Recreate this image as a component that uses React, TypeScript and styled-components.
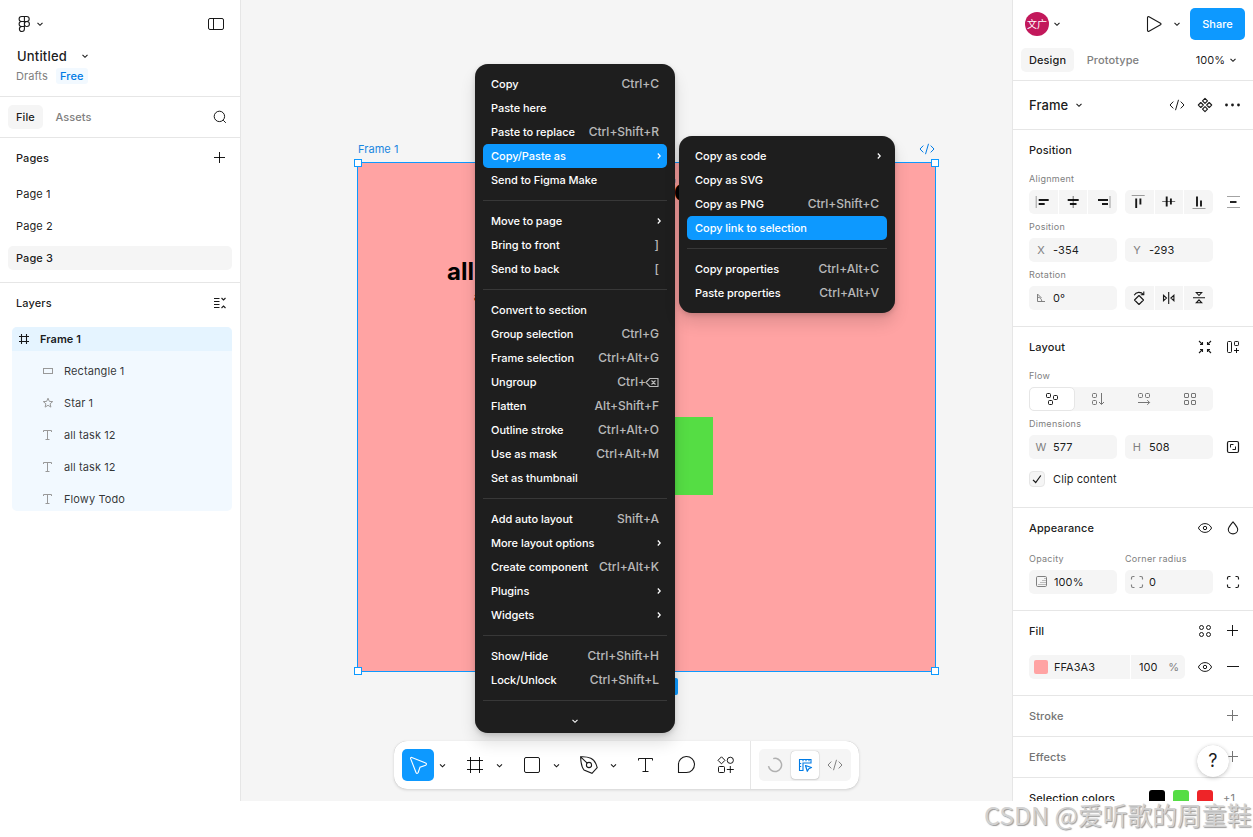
import React from "react";
import styled, { createGlobalStyle, css } from "styled-components";

const GlobalStyle = createGlobalStyle`
  * { box-sizing: border-box; }
  html, body { margin: 0; padding: 0; background: #fff; }
  body {
    font-family: Inter, "Liberation Sans", sans-serif;
    font-size: 11px;
    line-height: 16px;
    letter-spacing: 0.1px;
    color: rgba(0, 0, 0, 0.9);
    overflow: hidden;
  }
`;

const BLUE = "#0d99ff";
const LINE = "#e6e6e6";

/* ---------- icons: every drawing is centred on 0,0 ---------- */

const GLYPHS: Record<string, React.ReactNode> = {
  chevron: <path d="M-2.5 -1.2 0 1.3 2.5 -1.2" strokeWidth="1.1" />,
  chevronRight: <path d="M-1.2 -2.5 1.2 0 -1.2 2.5" strokeWidth="1.2" />,
  logo: (
    <path d="M.4-7.5h-2.8a2.5 2.5 0 0 0 0 5H.4M.4-7.5h2.3a2.5 2.5 0 0 1 0 5H.4M.4-2.5h-2.8a2.5 2.5 0 0 0 0 5H.4M2.9-2.5a2.5 2.5 0 1 1 0 5a2.5 2.5 0 1 1 0-5M.4 2.5h-2.8a2.5 2.5 0 1 0 2.8 2.5V-7.5" strokeWidth="1.1" />
  ),
  panel: <><rect x="-7.5" y="-5.5" width="15" height="11" rx="1.5" /><path d="M-2.5-5.5v11" /></>,
  search: <><circle cx="-.6" cy="-.6" r="5.2" /><path d="M3.2 3.2 5.8 5.8" /></>,
  plus: <path d="M-.5-6V5M-6-.5H5" strokeWidth="1" />,
  minus: <path d="M-6-.5H6" />,
  collapse: <path d="M-6-4.5h5.5M-6-1.5h5.5M-6 1.5h5.5M-6 4.5h5.5M1.5-5l2 2 2-2M1.5 5l2-2 2 2" strokeWidth="1.1" />,
  frameSmall: <path d="M-2.5-5V5M2.5-5V5M-5-2.5H5M-5 2.5H5" strokeWidth="1.1" />,
  rectSmall: <rect x="-4.5" y="-2.5" width="9" height="5" />,
  star: <path d="M0-4.8 1.35-1.6 4.7-1.4 2.1.8 2.9 4.1 0 2.3-2.9 4.1-2.1.8-4.7-1.4-1.35-1.6Z" />,
  textSmall: <path d="M-4.5-3v-1.5h8V-3M-.5-4.5v9M-2.5 4.5h4" />,
  cursor: <path d="M-7.4-6.4-1.9 7.7c.4 1 1.7 1 2 0L2 2.3 7.7.2c1-.4 1-1.8 0-2.1L-6.2-7.6c-.8-.3-1.5.4-1.2 1.2Z" strokeWidth="1.1" />,
  frame: <path d="M-4.5-8V8M4.5-8V8M-8-4.5H8M-8 4.5H8" />,
  rect: <rect x="-7.5" y="-7.5" width="15" height="15" rx="1.5" />,
  pen: (
    <>
      <path d="M-8.400-8.200C-8.200-3-8 1.500-5 5L3 8.300 8.200 2.600C7-2 5-5.500 1.800-6.800-1.500-8.200-5-8.400-8.400-8.200ZL-1.800-1.900" strokeWidth="1.1" />
      <circle cx="0" cy="0" r="2.600" strokeWidth="1.1" />
    </>
  ),
  text: <path d="M-7.5-4.500v-2h14v2M-.5-6.500v13M-3.500 6.500h6" />,
  bubble: <path d="M-7.500 7.500V0A8 8 0 1 1 .5 7.500Z" strokeWidth="1.1" />,
  actions: (
    <>
      <path d="M-4.500-8.200-1-4.700-4.500-1.200-8-4.700ZM4.300 1v7M.8 4.500h7" strokeLinejoin="round" />
      <circle cx="4.300" cy="-4.700" r="3.100" />
      <rect x="-7.500" y="1.500" width="6" height="6" rx="1" />
    </>
  ),
  arc: <path d="M-1.800-6.400A6.600 6.600 0 1 1-6.500 1.200" strokeWidth="1.500" />,
  ruler: (
    <>
      <path d="M-5.500-5.500h11.500v3.500h-8v7.500h-3.500ZM-2-3.800v-1.700M1-3.800v-1.700M4-3.800v-1.700M-3.800-1.500h-1.700M-3.800 1.500h-1.700" strokeWidth="1.100" />
      <path d="M.5.500 6.500 2.500 3.800 3.700 2.300 6.300Z" strokeWidth="1.200" strokeLinejoin="round" />
    </>
  ),
  code: <path d="M-3.700-3.400-7 0l3.300 3.400M3.700-3.400 7 0 3.700 3.400M1.500-5.200-1.500 5.200" />,
  play: <path d="M-6.500-6.400v12.800c0 .8.800 1.200 1.500.8L6.500.8c.7-.4.700-1.200 0-1.600L-5-7.200c-.7-.4-1.500 0-1.500.8Z" strokeWidth="1.100" />,
  component: (
    <path d="M0-6.700 2.500-4.200 0-1.700-2.500-4.200ZM0 1.700 2.500 4.200 0 6.700-2.500 4.200ZM-4.200-2.500-1.700 0-4.200 2.500-6.700 0ZM4.200-2.500 6.700 0 4.200 2.500 1.700 0Z" strokeLinejoin="round" strokeWidth="1.100" />
  ),
  dots: <g fill="currentColor" stroke="none"><circle cx="-6.500" r="1.400" /><circle cx="-.5" r="1.400" /><circle cx="5.500" r="1.400" /></g>,
  alignLeft: <><path d="M-6.800-6V6" opacity=".4" /><path d="M-4.300-2H5.700M-4.300 2H1.700" strokeWidth="1.900" /></>,
  alignCenter: <><path d="M.2-6V6" opacity=".6" /><path d="M-5.300-2h11M-3.100 2h6.600" strokeWidth="1.900" /></>,
  alignRight: <><path d="M7-6V6" opacity=".4" /><path d="M-5-2H5M-1 2H5" strokeWidth="1.900" /></>,
  alignTop: <><path d="M-7.300-6.500h13" opacity=".4" /><path d="M-2.800-3.500V6M1.400-3.500V2.500" strokeWidth="1.900" /></>,
  alignMiddle: <><path d="M-6.800-.5h13" opacity=".6" /><path d="M-2.300-5.500v10M1.900-3.500v6" strokeWidth="1.900" /></>,
  alignBottom: <><path d="M-6.500 6.500h13" opacity=".4" /><path d="M-2-5.500V4.500M2-1.500V4.500" strokeWidth="1.900" /></>,
  distribute: <><path d="M-6-5.500H7M-6 5.500H7" opacity=".4" /><path d="M-3 0h6.500" strokeWidth="1.900" /></>,
  angle: <path d="M-3.500-4V3.500H4M-3.500-.8C-1-.8.800 1 .800 3.500M-3.500-4 .5 0" />,
  rotate: <path d="M0-2.500 4.500 2 0 6.500-4.500 2ZM-4.800-2.700C-3-6.400 1.800-6.600 4.500-3.500M4.800-6.500v3.200H1.700" strokeLinejoin="round" strokeWidth="1.100" />,
  flipH: <path d="M-.3-6V6M-5.500-2.700v5.400L-2.500 0ZM4.900-2.700v5.400L1.900 0Z" strokeWidth="1.100" />,
  flipV: <path d="M-6-.3H6M-2.700-5.500h5.400L0-2.500ZM-2.700 4.800h5.400L0 1.900Z" strokeWidth="1.100" />,
  shrink: <path d="M-6-6-3-3M-5-2.500h2.500V-5M6-6 3-3M5-2.500H2.500V-5M-6 6-3 3M-5 2.500h2.500V5M6 6 3 3M5 2.500H2.500V5" strokeWidth="1.100" />,
  addLayout: <><rect x="-5.500" y="-5.500" width="4" height="11" rx="1" /><rect x="1.500" y="-5.500" width="4" height="4" rx=".8" /><path d="M3.500 1v5M1 3.500h5" /></>,
  flowFree: <><rect x="-5.500" y="-5.500" width="4" height="4" rx="1" /><rect x="1.500" y="-3.500" width="4" height="4" rx="1" /><rect x="-3.500" y="1.500" width="4" height="4" rx="1" /></>,
  flowDown: <><rect x="-5.500" y="-5.500" width="4" height="4" rx="1" /><rect x="-5.500" y="1.500" width="4" height="4" rx="1" /><path d="M3.500-6V5M1 3l2.500 2.500L6 3" /></>,
  flowRight: <><rect x="-5.500" y="-5.500" width="4" height="4" rx="1" /><rect x="1.500" y="-5.500" width="4" height="4" rx="1" /><path d="M-6 3.500H5.500M3.300 1.200 5.600 3.500 3.300 5.800" /></>,
  flowGrid: <><rect x="-5.500" y="-5.500" width="4" height="4" rx=".5" /><rect x="1.500" y="-5.500" width="4" height="4" rx=".5" /><rect x="-5.500" y="1.500" width="4" height="4" rx=".5" /><rect x="1.500" y="1.500" width="4" height="4" rx=".5" /></>,
  aspect: <><rect x="-5.500" y="-5.500" width="11" height="11" rx="1.500" strokeWidth="1.200" /><path d="M-2.500.500v-3h3M2.500-.500v3h-3" /></>,
  check: <path d="M-4 .8-1.300 3.500 3.800-3.500" strokeWidth="1.200" />,
  eye: <><path d="M-6.600 0C-5-3.200-2.500-4.400 0-4.400S5-3.200 6.600 0C5 3.200 2.500 4.400 0 4.400S-5 3.200-6.600 0Z" /><circle r="1.700" /></>,
  drop: <path d="M0-6.200C2.500-3 4.700-.8 4.700 1.600a4.700 4.300 0 0 1-9.400 0C-4.700-.8-2.500-3 0-6.200Z" strokeLinejoin="round" strokeWidth="1.100" />,
  opacity: <><rect x="-4.500" y="-5.500" width="10" height="10" rx="1.200" /><path d="M-2.500 2.500h7M-.500.500h5M1.500-1.500h3M3.500-3.500h1" strokeDasharray="1 1" /></>,
  corners: <path d="M-5.500-2.500v-1.500a1.500 1.500 0 0 1 1.500-1.500h1.500M2.500-5.500h1.500a1.500 1.500 0 0 1 1.500 1.500v1.500M5.500 2.500v1.500a1.500 1.500 0 0 1-1.500 1.500H2.500M-2.500 5.500h-1.500a1.500 1.500 0 0 1-1.500-1.500V2.500" strokeWidth="1.150" />,
  styles: <><circle cx="-3.500" cy="-3.500" r="2" /><circle cx="3.500" cy="-3.500" r="2" /><circle cx="-3.500" cy="3.500" r="2" /><circle cx="3.500" cy="3.500" r="2" /></>,
  backspace: <path d="M-6.500 0l3.800-4H5.500v8H-2.700ZM-1-2 3 2M3-2-1 2" strokeWidth="1.100" />,
};

const Svg = styled.svg<{ $color?: string }>`
  display: block;
  flex: none;
  overflow: visible;
  fill: none;
  stroke: currentColor;
  color: ${(p) => p.$color ?? "inherit"};
`;

function Icon({ name, size = 24, color }: { name: string; size?: number; color?: string }) {
  return (
    <Svg width={size} height={size} viewBox={`${-size / 2} ${-size / 2} ${size} ${size}`} $color={color}>
      {GLYPHS[name]}
    </Svg>
  );
}

/* ---------- shell ---------- */

const Editor = styled.div`
  display: grid;
  grid-template-columns: 241px 771px 241px;
  width: 1253px;
  height: 801px;
  overflow: hidden;
`;

const Page = styled.div`
  position: relative;
  width: 1253px;
  height: 837px;
  background: #fff;
`;

const Sidebar = styled.aside<{ $side: "left" | "right" }>`
  background: #fff;
  overflow: hidden;
  border-${(p) => (p.$side === "left" ? "right" : "left")}: 1px solid ${LINE};
`;

const Spacer = styled.span`
  flex: 1;
`;

/* ---------- left sidebar ---------- */

const FileHeader = styled.header`
  height: 97px;
  padding: 12px 12px 0 12px;
  border-bottom: 1px solid ${LINE};
`;

const Row = styled.div`
  display: flex;
  align-items: center;
`;

const TitleRow = styled(Row)`
  height: 24px;
  margin-top: 8px;
  padding-left: 5px;
  gap: 10px;
  font-size: 13px;
  font-weight: 550;
  letter-spacing: 0.17px;
`;

const PlanRow = styled(Row)`
  height: 16px;
  padding-left: 4px;
  gap: 8px;
  color: #808080;
`;

const PlanBadge = styled.span`
  padding: 0 4px;
  width: 32px;
  text-align: center;
  border-radius: 3px;
  background: #f2f9ff;
  color: #007be5;
  font-weight: 500;
`;

const TabsRow = styled(Row)`
  height: 41px;
  padding: 0 8px;
  border-bottom: 1px solid ${LINE};
`;

const Tab = styled.span<{ $active?: boolean }>`
  height: 24px;
  line-height: 24px;
  padding: 0 8px;
  border-radius: 5px;
  color: #808080;
  font-weight: 450;
  ${(p) =>
    p.$active &&
    css`
      background: #f5f5f5;
      color: rgba(0, 0, 0, 0.9);
      font-weight: 550;
      margin-right: 4.5px;
    `}
`;

const SectionTitle = styled(Row)<{ $muted?: boolean }>`
  height: 40px;
  padding: 0 8px 0 16px;
  gap: 4px;
  font-weight: ${(p) => (p.$muted ? 450 : 550)};
  color: ${(p) => (p.$muted ? "#757575" : "rgba(0,0,0,0.9)")};
`;

const PageList = styled.div`
  display: flex;
  flex-direction: column;
  gap: 8px;
  padding: 4px 8px 12px;
  border-bottom: 1px solid ${LINE};
`;

const PageItem = styled.div<{ $active?: boolean }>`
  height: 24px;
  padding-left: 8px;
  line-height: 24px;
  border-radius: 5px;
  background: ${(p) => (p.$active ? "#f5f5f5" : "transparent")};
  font-weight: ${(p) => (p.$active ? 550 : 400)};
`;

const LayerTree = styled.div`
  margin: 4px 8px 0 12px;
  height: 184px;
  border-radius: 5px;
  overflow: hidden;
  background: #f2f9ff;
`;

const LayerRoot = styled(Row)`
  height: 24px;
  gap: 4px;
  background: #e5f4ff;
  font-weight: 600;
  letter-spacing: 0.04px;
`;

const LayerItem = styled(Row)`
  height: 24px;
  margin-top: 8px;
  padding-left: 24px;
  gap: 4px;
  color: rgba(0, 0, 0, 0.8);
`;

const layers = [
  ["rectSmall", "Rectangle 1"],
  ["star", "Star 1"],
  ["textSmall", "all task 12"],
  ["textSmall", "all task 12"],
  ["textSmall", "Flowy Todo"],
];

function LeftSidebar() {
  return (
    <Sidebar $side="left">
      <FileHeader>
        <Row>
          <Icon name="logo" />
          <Icon name="chevron" size={8} />
          <Spacer />
          <Icon name="panel" />
        </Row>
        <TitleRow>
          Untitled
          <Icon name="chevron" size={16} />
        </TitleRow>
        <PlanRow>
          Drafts
          <PlanBadge>Free</PlanBadge>
        </PlanRow>
      </FileHeader>
      <TabsRow>
        <Tab $active>File</Tab>
        <Tab>Assets</Tab>
        <Spacer />
        <Icon name="search" />
      </TabsRow>
      <SectionTitle>
        Pages
        <Spacer />
        <Icon name="plus" />
      </SectionTitle>
      <PageList>
        <PageItem>Page 1</PageItem>
        <PageItem>Page 2</PageItem>
        <PageItem $active>Page 3</PageItem>
      </PageList>
      <SectionTitle>
        Layers
        <Spacer />
        <Icon name="collapse" />
      </SectionTitle>
      <LayerTree>
        <LayerRoot>
          <Icon name="frameSmall" />
          Frame 1
        </LayerRoot>
        {layers.map(([icon, label], i) => (
          <LayerItem key={i}>
            <Icon name={icon} color="#999" />
            {label}
          </LayerItem>
        ))}
      </LayerTree>
    </Sidebar>
  );
}

/* ---------- canvas ---------- */

const Canvas = styled.main`
  position: relative;
  background: #f5f5f5;
  overflow: hidden;
`;

const FrameNode = styled.div`
  position: absolute;
  left: 116px;
  top: 162px;
  width: 579px;
  height: 510px;
  border: 1px solid ${BLUE};
  background: #ffa3a3;
`;

const Handle = styled.i<{ $x: number; $y: number }>`
  position: absolute;
  left: ${(p) => p.$x}px;
  top: ${(p) => p.$y}px;
  width: 8px;
  height: 8px;
  border: 1px solid ${BLUE};
  background: #fff;
`;

const FrameLabel = styled.span`
  position: absolute;
  left: 117px;
  top: 141px;
  color: #1a86e0;
  letter-spacing: 0.05px;
`;

const DevBadge = styled.span`
  position: absolute;
  left: 674px;
  top: 137px;
  color: #007be5;
`;

const SizeBadge = styled.span`
  position: absolute;
  left: 374px;
  top: 678px;
  width: 63px;
  height: 17px;
  border-radius: 2px;
  background: ${BLUE};
`;

const GreenRect = styled.div`
  position: absolute;
  left: 260px;
  top: 254px;
  width: 95px;
  height: 78px;
  background: #55dd44;
`;

const NodeText = styled.span<{ $x: number; $y: number; $size: number }>`
  position: absolute;
  left: ${(p) => p.$x}px;
  top: ${(p) => p.$y}px;
  font-size: ${(p) => p.$size}px;
  line-height: ${(p) => p.$size}px;
  font-weight: 700;
  letter-spacing: 0;
  color: #000;
  white-space: nowrap;
`;

const Menu = styled.div<{ $x: number; $y: number; $w: number; $flush?: boolean }>`
  position: absolute;
  z-index: 3;
  left: ${(p) => p.$x}px;
  top: ${(p) => p.$y}px;
  width: ${(p) => p.$w}px;
  padding: 8px 8px ${(p) => (p.$flush ? 0 : 8)}px;
  border-radius: 13px;
  background: #1e1e1e;
  color: #fff;
  font-weight: 500;
  letter-spacing: -0.04px;
  -webkit-font-smoothing: antialiased;
  box-shadow: 0 10px 16px rgba(0, 0, 0, 0.12), 0 2px 5px rgba(0, 0, 0, 0.15), 0 0 0.5px rgba(0, 0, 0, 0.2);
`;

const MenuItem = styled.div<{ $active?: boolean }>`
  display: flex;
  align-items: center;
  justify-content: space-between;
  height: 24px;
  padding: 0 8px;
  border-radius: 5px;
  white-space: nowrap;
  background: ${(p) => (p.$active ? BLUE : "transparent")};
`;

const Shortcut = styled.span`
  display: flex;
  align-items: center;
  color: rgba(255, 255, 255, 0.7);
  font-size: 12px;
  font-weight: 450;
  letter-spacing: -0.02px;
`;

const MenuArrow = styled.span`
  margin-right: -4px;
`;

const Separator = styled.hr`
  height: 1px;
  margin: 8px 0;
  border: 0;
  background: #383838;
`;

const MoreBelow = styled.div`
  display: flex;
  justify-content: center;
  height: 24px;
  align-items: center;
  padding-right: 1px;
`;

type Entry = { label: string; keys?: string; sub?: boolean; active?: boolean; back?: boolean };

const mainMenu: Entry[][] = [
  [
    { label: "Copy", keys: "Ctrl+C" },
    { label: "Paste here" },
    { label: "Paste to replace", keys: "Ctrl+Shift+R" },
    { label: "Copy/Paste as", sub: true, active: true },
    { label: "Send to Figma Make" },
  ],
  [
    { label: "Move to page", sub: true },
    { label: "Bring to front", keys: "]" },
    { label: "Send to back", keys: "[" },
  ],
  [
    { label: "Convert to section" },
    { label: "Group selection", keys: "Ctrl+G" },
    { label: "Frame selection", keys: "Ctrl+Alt+G" },
    { label: "Ungroup", keys: "Ctrl+", back: true },
    { label: "Flatten", keys: "Alt+Shift+F" },
    { label: "Outline stroke", keys: "Ctrl+Alt+O" },
    { label: "Use as mask", keys: "Ctrl+Alt+M" },
    { label: "Set as thumbnail" },
  ],
  [
    { label: "Add auto layout", keys: "Shift+A" },
    { label: "More layout options", sub: true },
    { label: "Create component", keys: "Ctrl+Alt+K" },
    { label: "Plugins", sub: true },
    { label: "Widgets", sub: true },
  ],
  [
    { label: "Show/Hide", keys: "Ctrl+Shift+H" },
    { label: "Lock/Unlock", keys: "Ctrl+Shift+L" },
  ],
];

const subMenu: Entry[][] = [
  [
    { label: "Copy as code", sub: true },
    { label: "Copy as SVG" },
    { label: "Copy as PNG", keys: "Ctrl+Shift+C" },
    { label: "Copy link to selection", active: true },
  ],
  [
    { label: "Copy properties", keys: "Ctrl+Alt+C" },
    { label: "Paste properties", keys: "Ctrl+Alt+V" },
  ],
];

function MenuGroups({ groups }: { groups: Entry[][] }) {
  return (
    <>
      {groups.map((group, g) => (
        <React.Fragment key={g}>
          {g > 0 && <Separator />}
          {group.map((e) => (
            <MenuItem key={e.label} $active={e.active}>
              {e.label}
              {e.keys && (
                <Shortcut>
                  {e.keys}
                  {e.back && <Icon name="backspace" size={13} />}
                </Shortcut>
              )}
              {e.sub && (
                <MenuArrow>
                  <Icon name="chevronRight" size={8} />
                </MenuArrow>
              )}
            </MenuItem>
          ))}
        </React.Fragment>
      ))}
    </>
  );
}

const Toolbar = styled.div`
  position: absolute;
  left: 153px;
  top: 741px;
  display: flex;
  align-items: center;
  gap: 8px;
  width: 465px;
  height: 48px;
  padding: 0 8px;
  border-radius: 13px;
  background: #fff;
  box-shadow: 0 0 0.5px rgba(0, 0, 0, 0.3), 0 1px 3px rgba(0, 0, 0, 0.15);
`;

const ToolGroup = styled.div`
  display: flex;
  align-items: center;
`;

const Tool = styled.span<{ $active?: boolean }>`
  display: grid;
  place-items: center;
  width: 32px;
  height: 32px;
  border-radius: 5px;
  color: ${(p) => (p.$active ? "#fff" : "rgba(0,0,0,0.9)")};
  background: ${(p) => (p.$active ? BLUE : "transparent")};
`;

const ToolDivider = styled.span`
  width: 1px;
  height: 48px;
  background: ${LINE};
`;

const ModeSwitch = styled.div`
  display: flex;
  align-items: center;
  justify-content: space-between;
  width: 92px;
  height: 32px;
  padding: 0 2px;
  border-radius: 5px;
  background: #f5f5f5;
`;

const Mode = styled.span<{ $active?: boolean }>`
  display: grid;
  place-items: center;
  width: 28px;
  height: 28px;
  border-radius: 4px;
  color: ${(p) => (p.$active ? "#007be5" : "#808080")};
  ${(p) =>
    p.$active &&
    css`
      background: #fff;
      box-shadow: 0 0 1px rgba(0, 0, 0, 0.35), 0 1px 2px rgba(0, 0, 0, 0.12);
    `}
`;

function CanvasArea() {
  return (
    <Canvas>
      <FrameLabel>Frame 1</FrameLabel>
      <DevBadge>
        <Icon name="code" />
      </DevBadge>
      <FrameNode>
        <NodeText $x={298} $y={12} $size={30}>To</NodeText>
        <NodeText $x={89} $y={97} $size={24}>all</NodeText>
        <NodeText $x={116} $y={128} $size={12}>all</NodeText>
        <GreenRect />
        <Handle $x={-4} $y={-4} />
        <Handle $x={573} $y={-4} />
        <Handle $x={-4} $y={504} />
        <Handle $x={573} $y={504} />
      </FrameNode>
      <SizeBadge />
      <Toolbar>
        <ToolGroup>
          <Tool $active><Icon name="cursor" /></Tool>
          <Icon name="chevron" size={17} />
        </ToolGroup>
        {["frame", "rect", "pen"].map((name) => (
          <ToolGroup key={name}>
            <Tool><Icon name={name} /></Tool>
            <Icon name="chevron" size={17} />
          </ToolGroup>
        ))}
        {["text", "bubble", "actions"].map((name) => (
          <Tool key={name}><Icon name={name} /></Tool>
        ))}
        <ToolDivider />
        <ModeSwitch>
          <Mode><Icon name="arc" color="#b0b0b0" /></Mode>
          <Mode $active><Icon name="ruler" /></Mode>
          <Mode><Icon name="code" /></Mode>
        </ModeSwitch>
      </Toolbar>
      <Menu $x={234} $y={64} $w={200} $flush>
        <MenuGroups groups={mainMenu} />
        <Separator />
        <MoreBelow>
          <Icon name="chevron" size={16} />
        </MoreBelow>
      </Menu>
      <Menu $x={438} $y={136} $w={216}>
        <MenuGroups groups={subMenu} />
      </Menu>
    </Canvas>
  );
}

/* ---------- right sidebar ---------- */

const Inspector = styled.div`
  height: 801px;
  overflow: hidden;
`;

const AccountBar = styled(Row)`
  height: 48px;
  padding: 0 8px 0 12px;
`;

const Avatar = styled.span`
  width: 24px;
  height: 24px;
  border-radius: 50%;
  background: #c2185b;
  color: #fff;
  font: 400 10px/24px "Noto Sans CJK SC", sans-serif;
  letter-spacing: 0;
  text-align: center;
  margin-right: 4px;
`;

const ShareButton = styled.button`
  width: 55px;
  height: 32px;
  margin-left: 2px;
  padding: 0;
  border: 0;
  border-radius: 5px;
  background: ${BLUE};
  color: #fff;
  font: 550 11px/16px Inter, sans-serif;
`;

const InspectorTabs = styled(Row)`
  height: 33px;
  padding: 0 12px 8px 8px;
  border-bottom: 1px solid ${LINE};
`;

const Zoom = styled.span`
  letter-spacing: 0;
`;

const NodeHeader = styled(Row)`
  height: 49px;
  padding: 0 8px 0 16px;
  gap: 4px;
  border-bottom: 1px solid ${LINE};
  font-size: 13px;
  font-weight: 550;
`;

const Section = styled.section<{ $pad?: number }>`
  padding-bottom: ${(p) => p.$pad ?? 16}px;
  border-bottom: 1px solid ${LINE};
`;

const FieldRow = styled.div<{ $top?: number }>`
  display: grid;
  grid-template-columns: 88px 88px 24px;
  column-gap: 8px;
  padding: ${(p) => p.$top ?? 0}px 8px 0 16px;
`;

const Label = styled.span<{ $wide?: boolean }>`
  height: 20px;
  padding-top: 1px;
  line-height: 16px;
  font-size: 9px;
  letter-spacing: 0.27px;
  color: #808080;
  grid-column: ${(p) => (p.$wide ? "1 / -1" : "auto")};
  white-space: nowrap;
`;

const Segments = styled.div`
  display: grid;
  grid-template-columns: repeat(3, 1fr);
  gap: 1px;
  height: 24px;
  border-radius: 5px;
  overflow: hidden;
`;

const Segment = styled.span`
  display: grid;
  place-items: center;
  background: #f5f5f5;
`;

const Input = styled.div`
  display: flex;
  align-items: center;
  height: 24px;
  border-radius: 5px;
  background: #f5f5f5;
`;

const Prefix = styled.span<{ $gap?: number }>`
  display: grid;
  place-items: center;
  width: 24px;
  margin-right: ${(p) => p.$gap ?? 0}px;
  color: #808080;
`;

const FlowSwitch = styled.div`
  grid-column: 1 / 3;
  display: grid;
  grid-template-columns: repeat(4, 46px);
  height: 24px;
  border-radius: 5px;
  background: #f5f5f5;
  color: #757575;
`;

const FlowOption = styled.span<{ $active?: boolean }>`
  display: grid;
  place-items: center;
  border-radius: 5px;
  ${(p) =>
    p.$active &&
    css`
      color: rgba(0, 0, 0, 0.9);
      background: #fff;
      border: 1px solid ${LINE};
    `}
`;

const ClipRow = styled(Row)`
  height: 24px;
  margin-top: 8px;
  padding-left: 16px;
  gap: 8px;
`;

const Checkbox = styled.span`
  display: grid;
  place-items: center;
  width: 16px;
  height: 16px;
  border: 1px solid ${LINE};
  border-radius: 4px;
  background: #f5f5f5;
`;

const PaintRow = styled(Row)`
  padding: 4px 8px 0 16px;
  gap: 4px;
`;

const PaintInput = styled.div`
  display: grid;
  grid-template-columns: 101px 54px;
  gap: 1px;
  height: 24px;
  margin-right: 4px;
  border-radius: 5px;
  overflow: hidden;
`;

const PaintCell = styled.span<{ $pad: number }>`
  display: flex;
  align-items: center;
  padding-left: ${(p) => p.$pad}px;
  background: #f5f5f5;
`;

const Swatch = styled.span<{ $size: number; $fill: string }>`
  width: ${(p) => p.$size}px;
  height: ${(p) => p.$size}px;
  border-radius: ${(p) => (p.$size > 14 ? 3 : 2)}px;
  background: ${(p) => p.$fill};
`;

const PaintHex = styled.span`
  margin-left: 6px;
  letter-spacing: 0.05px;
`;

const Percent = styled.span`
  margin-left: 10.5px;
  color: #808080;
`;

const SelectionColors = styled(SectionTitle)`
  padding-right: 16px;
`;

const SwatchStrip = styled.span`
  display: flex;
  align-items: center;
  gap: 8px;
  font-weight: 400;
  color: #808080;
`;

const MoreColors = styled.span`
  width: 14px;
  margin-left: 2px;
`;

const HelpButton = styled.span`
  position: absolute;
  left: 1197px;
  top: 745px;
  width: 32px;
  height: 32px;
  border-radius: 50%;
  background: #fff;
  box-shadow: 0 1px 4px rgba(0, 0, 0, 0.22), 0 0 0.5px rgba(0, 0, 0, 0.2);
  font-size: 18px;
  line-height: 32px;
  text-align: center;
`;

const Watermark = styled.span`
  position: absolute;
  left: 984px;
  top: 799px;
  font: 400 24.8px/30px "Noto Sans CJK SC", sans-serif;
  letter-spacing: 0;
  color: #d2d2d2;
  text-shadow: 1px 1px 1px rgba(110, 110, 110, 0.7);
  white-space: nowrap;
`;

function RightSidebar() {
  return (
    <Sidebar $side="right">
      <Inspector>
        <AccountBar>
          <Avatar>文广</Avatar>
          <Icon name="chevron" size={8} />
          <Spacer />
          <Icon name="play" />
          <Icon name="chevron" size={22} />
          <ShareButton>Share</ShareButton>
        </AccountBar>
        <InspectorTabs>
          <Tab $active>Design</Tab>
          <Tab>Prototype</Tab>
          <Spacer />
          <Zoom>100%</Zoom>
          <Icon name="chevron" size={16} />
        </InspectorTabs>
        <NodeHeader>
          Frame
          <Icon name="chevron" size={14} />
          <Spacer />
          <Icon name="code" />
          <Icon name="component" />
          <Icon name="dots" />
        </NodeHeader>

        <Section>
          <SectionTitle>Position</SectionTitle>
          <FieldRow>
            <Label $wide>Alignment</Label>
            <Segments>
              {["alignLeft", "alignCenter", "alignRight"].map((n) => (
                <Segment key={n}><Icon name={n} /></Segment>
              ))}
            </Segments>
            <Segments>
              {["alignTop", "alignMiddle", "alignBottom"].map((n) => (
                <Segment key={n}><Icon name={n} /></Segment>
              ))}
            </Segments>
            <Icon name="distribute" />
          </FieldRow>
          <FieldRow $top={4}>
            <Label $wide>Position</Label>
            <Input><Prefix>X</Prefix>-354</Input>
            <Input><Prefix>Y</Prefix>-293</Input>
          </FieldRow>
          <FieldRow $top={4}>
            <Label $wide>Rotation</Label>
            <Input><Prefix><Icon name="angle" /></Prefix>0°</Input>
            <Segments>
              {["rotate", "flipH", "flipV"].map((n) => (
                <Segment key={n}><Icon name={n} /></Segment>
              ))}
            </Segments>
          </FieldRow>
        </Section>

        <Section>
          <SectionTitle>
            Layout
            <Spacer />
            <Icon name="shrink" />
            <Icon name="addLayout" />
          </SectionTitle>
          <FieldRow>
            <Label $wide>Flow</Label>
            <FlowSwitch>
              <FlowOption $active><Icon name="flowFree" size={22} /></FlowOption>
              <FlowOption><Icon name="flowDown" /></FlowOption>
              <FlowOption><Icon name="flowRight" /></FlowOption>
              <FlowOption><Icon name="flowGrid" /></FlowOption>
            </FlowSwitch>
          </FieldRow>
          <FieldRow $top={4}>
            <Label $wide>Dimensions</Label>
            <Input><Prefix>W</Prefix>577</Input>
            <Input><Prefix>H</Prefix>508</Input>
            <Icon name="aspect" />
          </FieldRow>
          <ClipRow>
            <Checkbox><Icon name="check" size={14} /></Checkbox>
            Clip content
          </ClipRow>
        </Section>

        <Section>
          <SectionTitle>
            Appearance
            <Spacer />
            <Icon name="eye" />
            <Icon name="drop" />
          </SectionTitle>
          <FieldRow $top={2}>
            <Label>Opacity</Label>
            <Label>Corner radius</Label>
            <span />
            <Input><Prefix $gap={1}><Icon name="opacity" /></Prefix>100%</Input>
            <Input><Prefix><Icon name="corners" /></Prefix>0</Input>
            <Icon name="corners" />
          </FieldRow>
        </Section>

        <Section>
          <SectionTitle>
            Fill
            <Spacer />
            <Icon name="styles" />
            <Icon name="plus" />
          </SectionTitle>
          <PaintRow>
            <PaintInput>
              <PaintCell $pad={5}>
                <Swatch $size={14} $fill="#ffa3a3" />
                <PaintHex>FFA3A3</PaintHex>
              </PaintCell>
              <PaintCell $pad={8}>
                100
                <Percent>%</Percent>
              </PaintCell>
            </PaintInput>
            <Icon name="eye" />
            <Icon name="minus" />
          </PaintRow>
        </Section>

        <Section $pad={0}>
          <SectionTitle $muted>
            Stroke
            <Spacer />
            <Icon name="plus" />
          </SectionTitle>
        </Section>
        <Section $pad={0}>
          <SectionTitle $muted>
            Effects
            <Spacer />
            <Icon name="plus" />
          </SectionTitle>
        </Section>
        <SelectionColors>
          Selection colors
          <Spacer />
          <SwatchStrip>
            <Swatch $size={16} $fill="#000" />
            <Swatch $size={16} $fill="#55dd44" />
            <Swatch $size={16} $fill="#ee2428" />
            <MoreColors>+1</MoreColors>
          </SwatchStrip>
        </SelectionColors>
      </Inspector>
    </Sidebar>
  );
}

export default function App() {
  return (
    <>
      <GlobalStyle />
      <Page>
        <Editor>
          <LeftSidebar />
          <CanvasArea />
          <RightSidebar />
        </Editor>
        <HelpButton>?</HelpButton>
        <Watermark>CSDN @爱听歌的周童鞋</Watermark>
      </Page>
    </>
  );
}
